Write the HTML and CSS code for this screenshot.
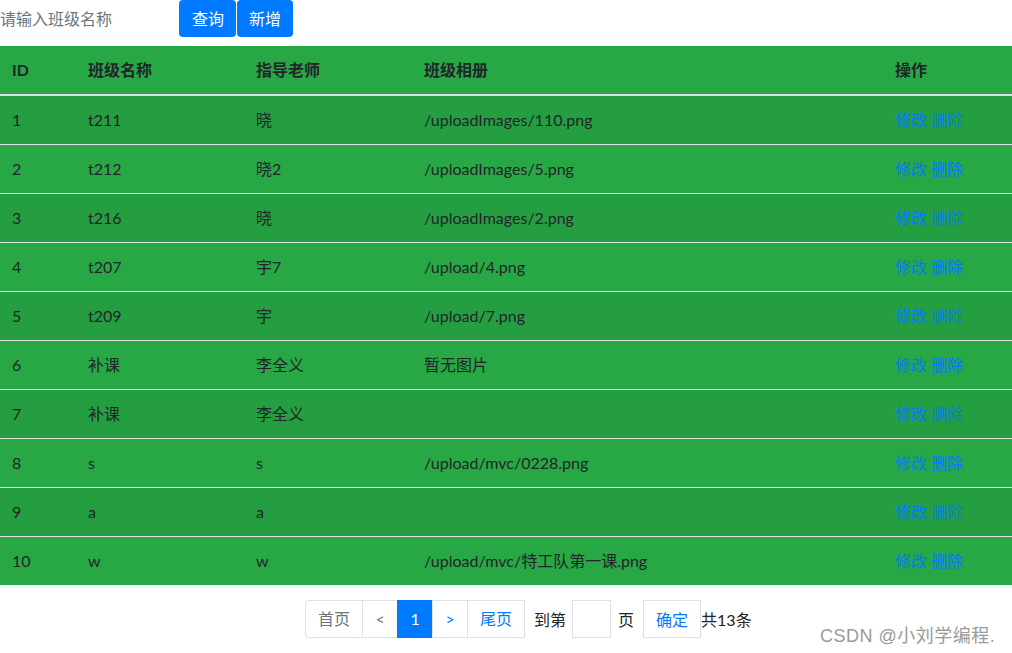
FILE: index.html
```html
<!DOCTYPE html>
<html lang="zh-CN">
<head>
    <meta charset="UTF-8">
    <title>班级管理</title>
    <link rel="stylesheet" href="styles.css">
</head>
<body>
    <div class="toolbar">
        <input class="search-input" type="text" placeholder="请输入班级名称">
        <button class="btn">查询</button>
        <button class="btn">新增</button>
    </div>

    <table class="table">
        <thead>
            <tr>
                <th class="col-id">ID</th>
                <th class="col-name">班级名称</th>
                <th class="col-teacher">指导老师</th>
                <th class="col-album">班级相册</th>
                <th class="col-op">操作</th>
            </tr>
        </thead>
        <tbody>
            <tr><td>1</td><td>t211</td><td>晓</td><td>/uploadImages/110.png</td><td><a href="#">修改</a> <a href="#">删除</a></td></tr>
            <tr><td>2</td><td>t212</td><td>晓2</td><td>/uploadImages/5.png</td><td><a href="#">修改</a> <a href="#">删除</a></td></tr>
            <tr><td>3</td><td>t216</td><td>晓</td><td>/uploadImages/2.png</td><td><a href="#">修改</a> <a href="#">删除</a></td></tr>
            <tr><td>4</td><td>t207</td><td>宇7</td><td>/upload/4.png</td><td><a href="#">修改</a> <a href="#">删除</a></td></tr>
            <tr><td>5</td><td>t209</td><td>宇</td><td>/upload/7.png</td><td><a href="#">修改</a> <a href="#">删除</a></td></tr>
            <tr><td>6</td><td>补课</td><td>李全义</td><td>暂无图片</td><td><a href="#">修改</a> <a href="#">删除</a></td></tr>
            <tr><td>7</td><td>补课</td><td>李全义</td><td></td><td><a href="#">修改</a> <a href="#">删除</a></td></tr>
            <tr><td>8</td><td>s</td><td>s</td><td>/upload/mvc/0228.png</td><td><a href="#">修改</a> <a href="#">删除</a></td></tr>
            <tr><td>9</td><td>a</td><td>a</td><td></td><td><a href="#">修改</a> <a href="#">删除</a></td></tr>
            <tr><td>10</td><td>w</td><td>w</td><td>/upload/mvc/特工队第一课.png</td><td><a href="#">修改</a> <a href="#">删除</a></td></tr>
        </tbody>
    </table>

    <div class="pager">
        <ul class="pagination">
            <li class="page-item disabled"><a class="page-link" href="#">首页</a></li>
            <li class="page-item disabled"><a class="page-link" href="#">&lt;</a></li>
            <li class="page-item active"><a class="page-link" href="#">1</a></li>
            <li class="page-item"><a class="page-link" href="#">&gt;</a></li>
            <li class="page-item"><a class="page-link" href="#">尾页</a></li>
        </ul>
        <span class="goto-label">到第</span>
        <input class="goto-input" type="text">
        <span class="goto-page">页</span>
        <button class="goto-btn">确定</button>
        <span class="total">共13条</span>
    </div>

    <div class="watermark">CSDN @小刘学编程.</div>
</body>
</html>
```

FILE: styles.css
```css
body { margin: 0; font-family: Lato, "Noto Sans CJK SC", sans-serif; font-size: 16px; color: #212529; background: #fff; }

.toolbar { display: flex; height: 37px; margin-bottom: 9px; }
.search-input { width: 179px; height: 37px; box-sizing: border-box; border: none; outline: none; padding: 0; font: inherit; color: #495057; }
.search-input::placeholder { color: #6c757d; }
.btn { height: 37px; margin-right: 1px; padding: 0 12px; border: none; border-radius: 4px; background: #007bff; color: #fff; font: inherit; line-height: 24px; cursor: pointer; }
.btn:first-of-type { padding: 0 12px 0 13px; }

.table { width: 100%; border-collapse: collapse; background: #28a745; }
.table th, .table td { padding: 12px 12px; line-height: 24px; text-align: left; vertical-align: middle; }
.table th { font-weight: bold; border-bottom: 2px solid #dee2e6; }
.table td { border-top: 1px solid #dee2e6; }
.table tbody tr:nth-child(odd) { background: rgba(0, 0, 0, 0.05); }
.table tbody tr:first-child td { border-top: none; }
.col-id { width: 52px; }
.col-name { width: 144px; }
.col-teacher { width: 144px; }
.col-album { width: 447px; }
.table a { color: #007bff; text-decoration: none; }

.pager { display: flex; align-items: center; margin: 15px 0 0 305px; }
.pagination { display: flex; list-style: none; margin: 0; padding: 0; }
.page-link { display: block; min-width: 10px; padding: 8px 12px; line-height: 20px; text-align: center; border: 1px solid #dee2e6; margin-left: -1px; color: #007bff; text-decoration: none; background: #fff; }
.page-item:first-child .page-link { margin-left: 0; border-radius: 4px 0 0 4px; }
.page-item.disabled .page-link { color: #6c757d; }
.page-item.active .page-link { background: #007bff; border-color: #007bff; color: #fff; }
.goto-label { margin-left: 9px; }
.goto-input { width: 39px; height: 38px; box-sizing: border-box; margin-left: 6px; border: 1px solid #dee2e6; outline: none; font: inherit; }
.goto-page { margin-left: 7px; }
.goto-btn { height: 38px; margin-left: 9px; padding: 0 12px; border: 1px solid #dee2e6; background: #fff; color: #007bff; font: inherit; cursor: pointer; }

.watermark { position: absolute; left: 820px; top: 621px; color: #9a9a9a; font-family: "Liberation Sans", "Noto Sans CJK SC", sans-serif; font-size: 18px; letter-spacing: 0.5px; text-shadow: 0 0 2px #fff; }
```
